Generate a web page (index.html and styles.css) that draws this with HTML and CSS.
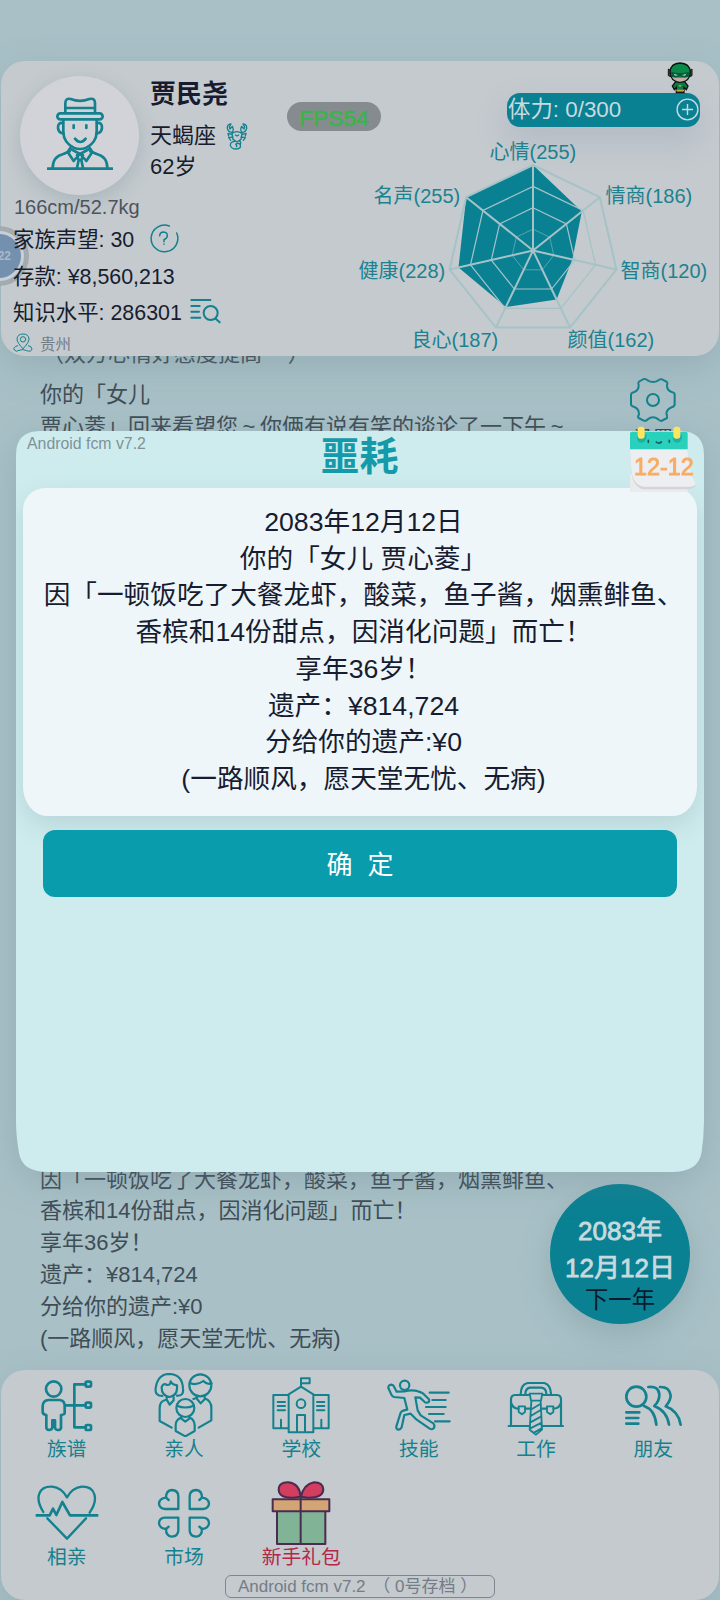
FILE: index.html
```html
<!DOCTYPE html>
<html lang="zh-CN">
<head>
<meta charset="utf-8">
<title>噩耗</title>
<link rel="stylesheet" href="styles.css">
</head>
<body>
<div class="app">
  <header class="card profile">
    <div class="bubble"><span>22</span></div>
    <section class="person">
      <div class="identity">
        <div class="avatar">
          <svg class="line-icon" width="66" height="74" viewBox="141 139 198 222" stroke-width="8">
            <path d="M143 354H337M158 352Q158 318 190 310L209 302M322 352Q322 318 290 310L271 302"/>
            <rect x="172" y="188" width="136" height="18" rx="9"/>
            <path d="M196 187V158Q196 141 212 145Q240 156 268 145Q285 141 285 158V187M196 172H285"/>
            <path d="M190 207V247Q192 276 221 291Q240 299 259 291Q288 276 290 247V207"/>
            <path d="M189 217Q173 215 174 232Q176 248 191 248M291 217Q307 215 306 232Q304 248 289 248"/>
            <path d="M221 224V232M259 224V232M225 264Q241 284 257 264M211 292L203 304L221 331L240 309L259 331L277 304L269 292M214 296L240 310L266 296M231 314L236 328L231 352M249 314L244 328L249 352M236 328H244"/>
          </svg>
        </div>
        <div class="who">
          <h1>贾民尧</h1>
          <p class="sign">天蝎座
            <svg class="line-icon" width="22" height="28" viewBox="682 212 66 84" stroke-width="4">
              <path d="M700 246Q714 236 730 246L727 264L715 272L703 264ZM700 243Q689 243 686 231Q685 219 697 218L692 227L694 233L701 225Q707 236 700 243M730 243Q741 243 744 231Q745 219 733 218L738 227L736 233L729 225Q723 236 730 243M700 250L688 246L690 254M703 257L690 259L696 267M730 250L742 246L740 254M727 257L740 259L734 267M708 270Q694 272 695 282Q698 293 713 293Q728 292 725 280Q718 273 711 279Q717 282 713 286M722 268Q728 272 725 280M710 251L715 254L720 251"/>
            </svg>
          </p>
          <p>62岁</p>
        </div>
      </div>
      <p class="body-size">166cm/52.7kg</p>
      <p class="stat">家族声望: 30
        <svg class="line-icon help" width="30" height="30" viewBox="450 521 90 90" stroke-width="4.500">
          <path d="M511 530A40 40 0 1 0 533 551M482 559Q483 548 494 548Q505 549 505 559Q505 566 495 571V577M495 584V585"/>
        </svg>
      </p>
      <p class="stat">存款: ¥8,560,213</p>
      <p class="stat">知识水平: 286301
        <svg class="line-icon lookup" width="31" height="26" viewBox="571 747 93 78" stroke-width="6">
          <path d="M575 753H632M575 771H600M575 788H598M575 806H602M648 809L660 820"/><circle cx="633" cy="792" r="21"/>
        </svg>
      </p>
      <p class="place">
        <svg class="line-icon" width="20" height="20" viewBox="41 850 60 60" stroke-width="3">
          <path d="M71 897Q53 879 53 868Q54 853 71 853Q88 853 89 868Q89 879 71 897M55 888Q39 893 45 901Q50 908 59 902Q71 897 82 903Q96 908 98 898Q98 890 87 888"/><circle cx="71" cy="869" r="8"/>
        </svg>贵州
      </p>
    </section>
    <section class="attributes">
      <div class="stamina">体力: 0/300
        <svg class="plus" width="23" height="23" viewBox="0 0 23 23"><circle cx="11.500" cy="11.500" r="10.400"/><path d="M11.500 6V17M6 11.500H17"/></svg>
      </div>
      <svg class="radar" viewBox="350 137 370 219" width="370" height="219">
        <polygon class="area" points="533,165 581.800,211.600 572.300,259.500 556.600,299.400 505.800,307 458.500,267.500 466.200,197.200"/>
        <g class="web">
          <polygon points="533,165 599.800,197.200 616.400,269.500 570.100,327.500 495.900,327.500 449.600,269.500 466.200,197.200"/>
          <polygon class="thin" points="533,186.400 583.100,210.500 595.500,264.800 560.800,308.300 505.200,308.300 470.500,264.800 482.900,210.500"/>
          <polygon class="thin" points="533,207.700 566.400,223.900 574.700,260 551.600,289 514.400,289 491.300,260 499.600,223.900"/>
          <polygon class="faint" points="533,229.100 549.700,237.200 553.800,255.300 542.300,269.800 523.700,269.800 512.200,255.300 516.300,237.200"/>
          <path d="M533 250.500V165M533 250.500L599.800 197.200M533 250.500L616.400 269.500M533 250.500L570.100 327.500M533 250.500L495.900 327.500M533 250.500L449.600 269.500M533 250.500L466.200 197.200"/>
        </g>
        <g class="labels">
          <text x="489.500" y="159">心情(255)</text>
          <text x="605.500" y="203">情商(186)</text>
          <text x="620.500" y="278">智商(120)</text>
          <text x="567.500" y="347">颜值(162)</text>
          <text x="411.500" y="347">良心(187)</text>
          <text x="358.500" y="278">健康(228)</text>
          <text x="373.500" y="203">名声(255)</text>
        </g>
      </svg>
    </section>
    <span class="fps">FPS54</span>
    <svg class="hero" width="26" height="32" viewBox="951 36 78 96">
      <path d="M955 57L964 63L962 80L955 77ZM1026 57L1017 63L1019 80L1026 77Z" fill="#087c42" stroke="#111" stroke-width="3"/>
      <path d="M977 95L967 108L973 119L979 112V128H1002V112L1009 119L1014 108L1004 95Z" fill="#087c42" stroke="#111" stroke-width="4"/>
      <path d="M960 66Q962 40 990 39Q1019 40 1021 66Q1021 94 990 97Q961 94 960 66Z" fill="#0a8a4a" stroke="#111" stroke-width="4"/>
      <path d="M966 81Q990 86 1015 81Q1008 95 990 95Q973 94 966 81Z" fill="#c4aea6"/>
      <path d="M963 65Q990 73 1018 65L1015 80Q1002 85 990 79Q978 85 966 80Z" fill="#08593a"/>
      <path d="M971 71L985 76L975 77ZM1009 71L995 76L1005 77Z" fill="#c2dcd0"/>
      <path d="M979 119H1002V124H979Z" fill="#c3a642"/><path d="M985 106L995 105L990 112Z" fill="#8ebc54"/>
    </svg>
  </header>

  <main class="log">
    <div class="entries older">
      <p class="mood">（双方心情好感度提高~~）</p>
      <p>你的「女儿<br>贾心菱」回来看望您 ~ 你俩有说有笑的谈论了一下午 ~</p>
    </div>
    <div class="entries latest">
      <p>因「一顿饭吃了大餐龙虾，酸菜，鱼子酱，烟熏鲱鱼、<br>香槟和14份甜点，因消化问题」而亡！</p>
      <p>享年36岁！</p>
      <p>遗产：¥814,724</p>
      <p>分给你的遗产:¥0</p>
      <p>(一路顺风，愿天堂无忧、无病)</p>
    </div>
    <div class="tools">
      <a class="settings">
        <svg class="line-icon" width="48" height="46" viewBox="808 111 144 138" stroke-width="6">
          <path d="M852 117Q860 116 864 121Q880 131 896 121Q900 116 907 118L922 126Q925 130 922 135Q921 151 936 156Q945 157 945 164V192Q945 199 938 201Q922 206 920 221Q924 227 922 234L905 243Q899 243 896 238Q880 226 864 238Q860 244 852 242L837 234Q833 230 838 223Q838 206 824 201Q814 199 814 193V166Q814 158 822 157Q838 151 837 135Q834 129 838 125Z"/><circle cx="880" cy="180" r="18"/>
        </svg>设置</a>
      <button class="next-year"><b>2083年</b><b>12月12日</b><span>下一年</span></button>
    </div>
  </main>

  <nav class="card menu">
    <a><svg class="line-icon" viewBox="104 39 192 192" stroke-width="8">
      <circle cx="160" cy="87" r="23"/><path d="M145 120H178Q194 122 193 139V158Q194 164 182 165V204Q181 210 173 210Q165 210 164 203V181H156V203Q154 210 146 210Q139 209 138 203V165Q126 163 127 154V138Q128 121 145 120M193 136H255M257 73H222V202H257"/><rect x="256" y="65" width="16" height="15" rx="4"/><rect x="256" y="128" width="16" height="15" rx="4"/><rect x="256" y="195" width="16" height="15" rx="4"/>
    </svg>族谱</a>
    <a><svg class="line-icon" viewBox="456 39 192 192" stroke-width="6.500">
      <path d="M487 108Q464 108 467 85Q473 42 508 42Q547 43 549 86Q552 108 531 107M485 81Q490 68 501 75Q512 76 512 64Q515 73 531 76Q534 106 509 111Q484 107 485 81M500 112V119L509 134L521 121V112M496 120Q479 124 479 144V183L515 203"/>
      <circle cx="601" cy="76" r="33"/><path d="M570 69Q590 78 610 63Q621 75 635 70M591 108V117L602 130L614 118V108M580 117L591 113M614 115Q635 123 634 145V181L596 203"/>
      <circle cx="556" cy="144" r="27"/><path d="M531 137Q556 148 581 137M544 168V176L556 185L568 176V168M542 173Q527 180 527 195V213L556 229L584 213V195Q583 179 570 173"/>
    </svg>亲人</a>
    <a><svg class="line-icon" viewBox="88 39 192 192" stroke-width="6">
      <path d="M147 105H101V205H147M221 105H267V205H221M147 217H221V103L184 80L147 103ZM184 80V55H210V70H184M172 216V165H196V216M114 126H136M114 138H136M114 151H136M232 126H254M232 138H254M232 151H254M124 203V179M245 203V179"/><circle cx="184" cy="131" r="13"/>
    </svg>学校</a>
    <a><svg class="line-icon" viewBox="440 39 192 192" stroke-width="6.500">
      <circle cx="493" cy="76" r="14"/><path d="M492 114L461 111Q455 109 453 104L444 84Q443 75 453 74Q460 75 462 82L469 95L492 94Q516 88 533 94Q548 98 552 104L566 118Q569 127 560 128Q554 129 550 123L539 113L525 112L532 151L541 166L579 190Q585 197 580 205Q575 210 568 206L529 179L511 161L492 165L484 202Q480 210 474 209Q467 207 468 199L481 158Q485 151 501 149L492 114M568 98H625M576 120H616M557 141H616M566 162H610M584 184H628"/>
    </svg>技能</a>
    <a><svg class="line-icon" viewBox="72 669 192 192" stroke-width="6.500">
      <path d="M93 827V752Q92 735 105 735H148M188 735H231Q244 735 243 752V827M86 828H149M185 828H249M122 732Q123 703 143 699H193Q212 704 213 732M136 732Q137 714 151 713H184Q199 715 199 732M93 757Q97 776 115 776M136 776H153M183 776H199M221 776Q240 774 243 757"/><path d="M116 769H135V786L126 793L116 786ZM201 769H220V786L211 793L201 786ZM149 731H187L183 752H153ZM154 753L149 839L168 854L186 839L182 753M152 779L181 762M151 799L182 780M150 818L184 799M151 835L185 818M162 848L185 835" stroke-width="5.500"/>
    </svg>工作</a>
    <a><svg class="line-icon" viewBox="424 669 192 192" stroke-width="8">
      <circle cx="470" cy="740" r="30"/><path d="M440 787H479M440 804H476M440 821H476M493 768Q526 779 530 824M506 711Q536 707 539 733Q540 752 524 768Q562 783 568 824M541 711Q569 710 573 736Q573 753 558 769Q596 783 603 824"/>
    </svg>朋友</a>
    <a><svg class="line-icon" viewBox="104 363 192 192" stroke-width="7">
      <path d="M129 456C100 410 118 378 155 380Q184 383 200 412Q216 383 245 380C284 379 297 416 268 458M141 475L200 536L257 475"/><path d="M106 466H148L158 446L168 465L186 426L209 466H294" stroke-width="8" stroke-linecap="butt"/>
    </svg>相亲</a>
    <a><svg class="line-icon" viewBox="456 363 192 192" stroke-width="7">
      <path d="M535 447H495Q478 446 477 431Q478 415 498 413Q498 392 515 390Q535 391 535 409Z"/>
      <path d="M535 447H495Q478 446 477 431Q478 415 498 413Q498 392 515 390Q535 391 535 409Z" transform="translate(1104 0) scale(-1 1)"/>
      <path d="M535 447H495Q478 446 477 431Q478 415 498 413Q498 392 515 390Q535 391 535 409Z" transform="translate(0 920) scale(1 -1)"/>
      <path d="M535 447H495Q478 446 477 431Q478 415 498 413Q498 392 515 390Q535 391 535 409Z" transform="translate(1104 920) scale(-1 -1)"/>
      <path d="M498 413L506 420M606 413L598 420M498 507L506 500M606 507L598 500"/>
    </svg>市场</a>
    <a class="gift"><svg viewBox="88 363 192 192" stroke="#4c2b50" stroke-width="6" stroke-linejoin="round">
      <path fill="#81b496" d="M112 453H257V552H112Z"/><path fill="#d3a574" d="M99 418H269V454H99Z"/><path fill="#d33e60" d="M183 410Q180 371 146 367Q117 366 117 390Q119 415 160 413ZM184 410Q192 373 223 367Q250 367 251 389Q249 414 205 413Z"/><path d="M183 410V552"/>
    </svg>新手礼包</a>
    <p class="save-slot">Android fcm v7.2 <span>（ 0号存档 ）</span></p>
  </nav>

  <div class="dialog-layer">
    <section class="dialog">
      <span class="version">Android fcm v7.2</span>
      <h2>噩耗</h2>
      <div class="message">
        <p>2083年12月12日</p>
        <p>你的「女儿 贾心菱」</p>
        <p>因「一顿饭吃了大餐龙虾，酸菜，鱼子酱，烟熏鲱鱼、香槟和14份甜点，因消化问题」而亡！</p>
        <p>享年36岁！</p>
        <p>遗产：¥814,724</p>
        <p>分给你的遗产:¥0</p>
        <p>(一路顺风，愿天堂无忧、无病)</p>
      </div>
      <button class="confirm">确 定</button>
    </section>
    <div class="calendar">
      <svg width="68" height="68" viewBox="808 258 204 204">
        <path d="M811 400L984 436V456H811Z" fill="#e9ebec"/>
        <path d="M811 328H984Q987 400 1008 436Q1003 447 984 448H851Q817 441 814 385Z" fill="#d3d5d8"/>
        <path d="M811 328H984Q987 400 1008 430Q1007 440 990 440H851Q817 434 814 380Z" fill="#edeef2"/>
        <path d="M811 281Q811 275 817 275H978Q984 275 984 281V328H811Z" fill="#29d0bc"/>
        <path d="M833 286Q829 307 845 308Q862 307 860 283M940 286Q936 307 952 308Q969 307 967 283" fill="#1cb0a6"/>
        <rect x="834" y="260" width="21" height="36" rx="9" fill="#ffe45e"/><rect x="941" y="260" width="21" height="36" rx="9" fill="#ffe45e"/>
        <path d="M866 301V307M929 301V307M890 306Q897 313 905 306" fill="none" stroke="#185b62" stroke-width="5" stroke-linecap="round"/>
      </svg>
      <span>12-12</span>
    </div>
  </div>
</div>
</body>
</html>
```

FILE: styles.css
```css
* { box-sizing: border-box; }
body {
  margin: 0;
  font-family: "Liberation Sans", "Noto Sans CJK SC", sans-serif;
  color: #171c30;
}
h1, h2, p { margin: 0; }
button { border: 0; padding: 0; font: inherit; }

.app {
  position: relative;
  display: flex;
  flex-direction: column;
  width: 720px;
  height: 1600px;
  padding-top: 61px;
  overflow: hidden;
  background: #a8c0c6;
}
.card {
  position: relative;
  z-index: 1;
  margin: 0 1px;
  border-radius: 24px;
  background: #c4cace;
  box-shadow: 0 12px 36px rgba(110, 140, 150, .3);
}
.line-icon {
  flex: none;
  fill: none;
  stroke: #14818f;
  stroke-linecap: round;
  stroke-linejoin: round;
}

/* profile card */
.profile { display: flex; height: 295px; z-index: 3; }
.person { position: relative; width: 349px; padding: 15px 0 0 12px; }
.identity { display: flex; gap: 11px; height: 118px; padding-left: 7px; }
.avatar {
  display: flex;
  align-items: center;
  justify-content: center;
  width: 119px;
  height: 119px;
  border-radius: 50%;
  background: #d1d3d8;
  box-shadow: 0 6px 18px rgba(120, 145, 155, .35);
}
.avatar svg { margin-top: -4px; }
.who { font-size: 22px; line-height: 30.500px; }
.who h1 { margin-bottom: 9px; font-size: 26px; line-height: 36px; }
.sign { display: flex; gap: 10px; align-items: center; }
.body-size { padding-left: 1px; font-size: 20px; line-height: 27px; color: #4d545d; }
.stat { position: relative; display: flex; align-items: center; height: 36.600px; padding-bottom: 3px; font-size: 21.400px; }
.help { margin-left: 15px; }
.lookup { margin-left: 8px; }
.place {
  display: flex;
  gap: 7px;
  align-items: center;
  height: 24px;
  font-size: 15.500px;
  color: #747d88;
}
.attributes { display: flex; flex-direction: column; width: 369px; }
.stamina {
  display: flex;
  align-items: center;
  justify-content: space-between;
  width: 193px;
  height: 34px;
  margin: 32px 0 10px 157px;
  padding: 0 1px;
  border-radius: 13px;
  background: #0a8193;
  box-shadow: 0 14px 30px rgba(140, 150, 175, .3);
  font-size: 22.400px;
  line-height: 30px;
  color: #c8dade;
}
.plus { margin-top: -1px; fill: none; stroke: #c8dade; stroke-width: 1.400; }
.area { fill: #0a8193; }
.web { fill: none; stroke: #a5c3c7; stroke-width: 2; }
.web .thin { stroke-width: 1.200; }
.web .faint { stroke-width: 1; opacity: .5; }
.labels { font-size: 20px; fill: #1b8290; }
.fps {
  position: absolute;
  left: 286px;
  top: 41px;
  width: 94px;
  height: 29px;
  border-radius: 15px;
  background: #868b90;
  font-size: 22.700px;
  line-height: 33px;
  text-align: center;
  color: #38b54a;
  -webkit-text-stroke: .5px;
}
.hero { position: absolute; left: 666px; top: 1px; }

/* event log */
.log { position: relative; display: flex; flex: 1; flex-direction: column; justify-content: space-between; padding: 0 40px 15px; }
.entries { font-size: 22px; line-height: 31.900px; color: #3f4d57; white-space: nowrap; }
.older { margin-top: -18px; word-spacing: -1.500px; }
.mood { margin: 0 0 9px 2px; }
.tools {
  position: absolute;
  right: 30px;
  top: 21px;
  bottom: 46px;
  display: flex;
  flex-direction: column;
  align-items: center;
  justify-content: space-between;
}
.settings {
  display: flex;
  flex-direction: column;
  align-items: center;
  margin-left: 66px;
  font-size: 20px;
  line-height: 32px;
  color: #2b4a55;
}
.next-year {
  display: flex;
  flex-direction: column;
  align-items: center;
  width: 140px;
  height: 140px;
  padding-top: 29px;
  border-radius: 50%;
  background: #0a8193;
  box-shadow: 0 12px 30px rgba(110, 140, 150, .35);
  font-size: 26px;
  line-height: 36.500px;
  color: #c8dade;
}
.next-year b { font-weight: 400; -webkit-text-stroke: .8px; }
.next-year span { font-size: 23.300px; line-height: 28px; color: #0b1a2c; }

/* bottom menu */
.menu {
  display: grid;
  grid-template-columns: repeat(6, 1fr);
  grid-template-rows: 108px 97px 25px;
  height: 230px;
  padding: 0 7px;
}
.menu a {
  display: flex;
  flex-direction: column;
  align-items: center;
  padding-top: 3px;
  font-size: 19.800px;
  line-height: 24px;
  color: #14818f;
  white-space: nowrap;
}
.menu svg { width: 64px; height: 64px; fill: none; }
.menu .gift { color: #b5264b; }
.save-slot {
  grid-column: 1 / -1;
  justify-self: center;
  width: 270px;
  height: 23px;
  padding-left: 12px;
  border: 1.500px solid #7d858e;
  border-radius: 6px;
  font-size: 17px;
  line-height: 22px;
  white-space: nowrap;
  color: #747c87;
}
.save-slot span { margin-left: 3px; }

/* floating bubble, sits below the profile text */
.bubble {
  position: absolute;
  left: -32px;
  top: 165px;
  width: 60px;
  height: 60px;
  padding: 5px;
  border-radius: 50%;
  background: #a3abae;
}
.bubble span {
  display: block;
  height: 50px;
  padding-right: 10px;
  border: 3px solid #c7d0d8;
  border-radius: 50%;
  background: #7390ae;
  font-size: 12px;
  font-weight: bold;
  line-height: 44px;
  text-align: right;
  color: #a9b8ca;
}

/* dialog */
.dialog-layer {
  position: absolute;
  z-index: 4;
  left: 16px;
  top: 431px;
  width: 688px;
  filter: drop-shadow(0 8px 18px rgba(100, 130, 140, .3));
}
.dialog {
  display: flex;
  flex-direction: column;
  height: 741px;
  padding: 0 7px;
  background: #ceecee;
  clip-path: path("M0 24Q0 0 24 0H664Q688 0 688 24V690Q688 705 685.500 722Q682 741 656 741H32Q6 741 3 722Q0 705 0 690Z");
}
.version { position: absolute; left: 11px; top: 4px; font-size: 15.850px; color: #7f9298; }
.dialog h2 {
  height: 57px;
  padding-right: 1px;
  font-size: 39px;
  line-height: 52px;
  text-align: center;
  color: #159aa9;
}
.message {
  height: 328px;
  padding: 16px 13px 16px 20px;
  border-radius: 22px 22px 24px 24px / 22px 22px 30px 30px;
  background: #eff6f9;
  box-shadow: 0 10px 26px rgba(140, 165, 170, .32);
  font-size: 26.670px;
  line-height: 36.700px;
  text-align: center;
}
.confirm {
  width: 634px;
  height: 67px;
  margin: 14px auto 0;
  padding: 0 0 2px 0;
  border-radius: 12px;
  background: #089cad;
  font-size: 26px;
  word-spacing: 8px;
  color: #fff;
}
.calendar { position: absolute; left: 613px; top: -5px; width: 68px; }
.calendar span {
  position: absolute;
  left: 5px;
  top: 27px;
  font-size: 23.300px;
  line-height: 28px;
  color: #f6ac62;
  -webkit-text-stroke: .9px;
}
```
